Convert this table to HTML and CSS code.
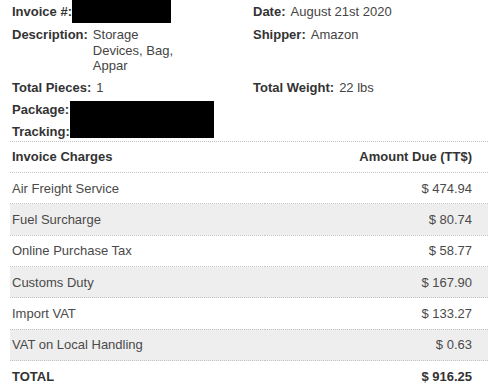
FILE: index.html
```html
<!DOCTYPE html>
<html>
<head>
<meta charset="utf-8">
<link rel="stylesheet" href="styles.css">
</head>
<body>
<div class="invoice">
  <div class="meta">
    <div class="cell row1">
      <span class="lbl lbl-inv">Invoice #:</span><span class="redact redact-inv"></span>
    </div>
    <div class="cell row1">
      <span class="lbl">Date:</span><span class="val">August 21st 2020</span>
    </div>
    <div class="cell row2">
      <span class="lbl">Description:</span><span class="val desc">Storage Devices, Bag, Appar</span>
    </div>
    <div class="cell row2">
      <span class="lbl">Shipper:</span><span class="val">Amazon</span>
    </div>
    <div class="cell row3">
      <span class="lbl">Total Pieces:</span><span class="val">1</span>
    </div>
    <div class="cell row3">
      <span class="lbl">Total Weight:</span><span class="val">22 lbs</span>
    </div>
    <div class="cell row4">
      <div class="pkg-labels">
        <span class="lbl">Package:</span>
        <span class="lbl">Tracking:</span>
      </div>
      <span class="redact redact-pkg"></span>
    </div>
  </div>
  <table class="charges">
    <tr class="head"><td>Invoice Charges</td><td class="amt">Amount Due (TT$)</td></tr>
    <tr><td>Air Freight Service</td><td class="amt">$ 474.94</td></tr>
    <tr class="alt"><td>Fuel Surcharge</td><td class="amt">$ 80.74</td></tr>
    <tr><td>Online Purchase Tax</td><td class="amt">$ 58.77</td></tr>
    <tr class="alt"><td>Customs Duty</td><td class="amt">$ 167.90</td></tr>
    <tr><td>Import VAT</td><td class="amt">$ 133.27</td></tr>
    <tr class="alt"><td>VAT on Local Handling</td><td class="amt">$ 0.63</td></tr>
    <tr class="total"><td>TOTAL</td><td class="amt">$ 916.25</td></tr>
  </table>
</div>
</body>
</html>
```
FILE: styles.css
```css
html, body {
  margin: 0;
  padding: 0;
  background: #fff;
}
body {
  font-family: "Liberation Sans", Arial, sans-serif;
  font-size: 13px;
  color: #444;
}
.meta {
  display: grid;
  grid-template-columns: 241px 1fr;
  padding-left: 12px;
}
.cell {
  display: flex;
  align-items: flex-start;
}
.lbl {
  font-weight: bold;
  color: #333;
  margin-right: 5px;
  white-space: nowrap;
}
.val {
  color: #444;
}
.row1 {
  height: 23px;
  align-items: center;
  line-height: 15px;
}
.row2 {
  margin-top: 4px;
  line-height: 15.5px;
}
.desc {
  width: 88px;
}
.row3 {
  margin-top: 6px;
  line-height: 16px;
}
.row4 {
  margin-top: 5px;
  height: 40px;
}
.lbl-inv {
  margin-right: 0;
}
.redact {
  display: block;
  background: #000;
}
.redact-inv {
  width: 99px;
  height: 23px;
}
.pkg-labels {
  display: flex;
  flex-direction: column;
  gap: 6px;
  padding-top: 1px;
  line-height: 16px;
}
.pkg-labels .lbl {
  margin-right: 0;
}
.redact-pkg {
  width: 144px;
  height: 37px;
}
.charges {
  margin-left: 10px;
  width: 478px;
  border-collapse: collapse;
}
.charges td {
  border-top: 1px dotted #c4c4c4;
  padding: 7.7px 16px 7.7px 2px;
  line-height: 15px;
  color: #4a4a4a;
}
.charges .amt {
  text-align: right;
}
.charges .alt td {
  background: #eee;
}
.charges .head td,
.charges .total td {
  font-weight: bold;
  color: #333;
}
```
